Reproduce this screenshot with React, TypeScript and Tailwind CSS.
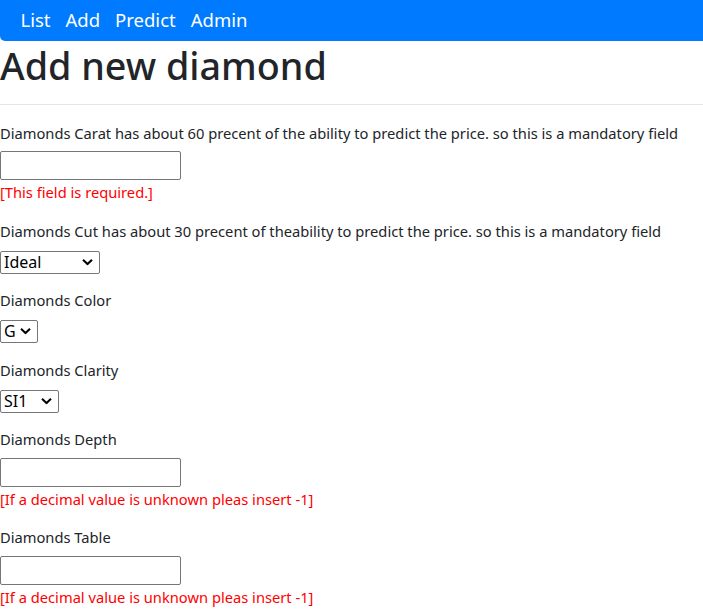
import React from "react";

const Chevron = () => (
  <svg width="11" height="7" viewBox="0 0 11 7" className="pointer-events-none absolute right-[7px] top-1/2 -translate-y-1/2">
    <path d="M1 1.2 L5.5 5.5 L10 1.2" fill="none" stroke="#000" strokeWidth="2" />
  </svg>
);

function Select({ value, options, width }: { value: string; options: string[]; width: string }) {
  return (
    <div className={`relative ${width} h-[23px]`}>
      <select
        defaultValue={value}
        className="appearance-none w-full h-full border border-[#767676] rounded-[2px] bg-white pl-[3px] text-[16px] leading-[21px] text-black outline-none"
      >
        {options.map((o) => (
          <option key={o}>{o}</option>
        ))}
      </select>
      <Chevron />
    </div>
  );
}

const Input = () => (
  <input type="text" className="block w-[181px] h-[29px] border border-[#767676] rounded-[2px] bg-white outline-none" />
);

const Label = ({ children, mb }: { children: React.ReactNode; mb: string }) => (
  <div className={`text-[14.7px] leading-[24px] text-[#212529] ${mb}`}>{children}</div>
);

const Err = ({ children }: { children: React.ReactNode }) => (
  <div className="text-[14.7px] leading-[24px] text-[#ff0000]">{children}</div>
);

export default function App() {
  return (
    <div className="w-[703px] min-h-[616px] bg-white text-[#212529]" style={{ fontFamily: '"Noto Sans", sans-serif' }}>
      <nav className="h-[41px] bg-[#007bff] rounded-bl-[5px] flex items-center pl-[13px]">
        {["List", "Add", "Predict", "Admin"].map((l) => (
          <span key={l} className="px-[7.5px] text-[18.5px] text-white leading-none">
            {l}
          </span>
        ))}
      </nav>
      <h1 className="text-[37.7px] leading-[48px] font-medium text-[#212529] mt-[1px] mb-[14px]">Add new diamond</h1>
      <hr className="border-0 border-t border-[#e5e5e5] m-0" />
      <div className="pt-[16px]">
        <div className="mb-[15px]">
          <Label mb="mb-[6px]">Diamonds Carat has about 60 precent of the ability to predict the price. so this is a mandatory field</Label>
          <Input />
          <Err>[This field is required.]</Err>
        </div>
        <div className="mb-[15px]">
          <Label mb="mb-[7px]">Diamonds Cut has about 30 precent of theability to predict the price. so this is a mandatory field</Label>
          <Select value="Ideal" options={["Ideal", "Premium", "Very Good", "Good", "Fair"]} width="w-[100px]" />
        </div>
        <div className="mb-[16px]">
          <Label mb="mb-[7px]">Diamonds Color</Label>
          <Select value="G" options={["D", "E", "F", "G", "H", "I", "J"]} width="w-[38px]" />
        </div>
        <div className="mb-[15px]">
          <Label mb="mb-[7px]">Diamonds Clarity</Label>
          <Select value="SI1" options={["IF", "VVS1", "VVS2", "VS1", "VS2", "SI1", "SI2", "I1"]} width="w-[59px]" />
        </div>
        <div className="mb-[14px]">
          <Label mb="mb-[7px]">Diamonds Depth</Label>
          <Input />
          <Err>[If a decimal value is unknown pleas insert -1]</Err>
        </div>
        <div className="mb-[15px]">
          <Label mb="mb-[7px]">Diamonds Table</Label>
          <Input />
          <Err>[If a decimal value is unknown pleas insert -1]</Err>
        </div>
      </div>
    </div>
  );
}
